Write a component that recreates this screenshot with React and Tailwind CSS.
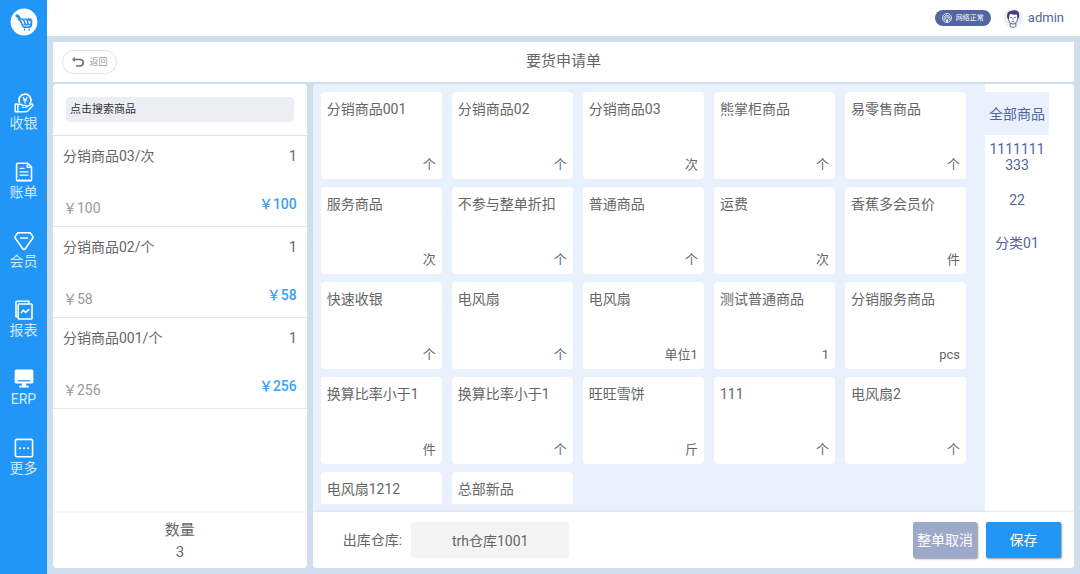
import React, { useState } from "react";

const products = [
  { name: "分销商品001", unit: "个" },
  { name: "分销商品02", unit: "个" },
  { name: "分销商品03", unit: "次" },
  { name: "熊掌柜商品", unit: "个" },
  { name: "易零售商品", unit: "个" },
  { name: "服务商品", unit: "次" },
  { name: "不参与整单折扣", unit: "个" },
  { name: "普通商品", unit: "个" },
  { name: "运费", unit: "次" },
  { name: "香蕉多会员价", unit: "件" },
  { name: "快速收银", unit: "个" },
  { name: "电风扇", unit: "个" },
  { name: "电风扇", unit: "单位1" },
  { name: "测试普通商品", unit: "1" },
  { name: "分销服务商品", unit: "pcs" },
  { name: "换算比率小于1", unit: "件" },
  { name: "换算比率小于1", unit: "个" },
  { name: "旺旺雪饼", unit: "斤" },
  { name: "111", unit: "个" },
  { name: "电风扇2", unit: "个" },
  { name: "电风扇1212" },
  { name: "总部新品" },
];

const cart = [
  { name: "分销商品03/次", count: 1, price: 100 },
  { name: "分销商品02/个", count: 1, price: 58 },
  { name: "分销商品001/个", count: 1, price: 256 },
];

const categories = ["全部商品", "1111111333", "22", "分类01"];

const Svg = ({ children }) => (
  <svg
    viewBox="0 0 20 20"
    className="h-5 w-5"
    fill="none"
    stroke="currentColor"
    strokeWidth="1.6"
    strokeLinecap="round"
    strokeLinejoin="round"
    aria-hidden="true"
  >
    {children}
  </svg>
);

const CashIcon = () => (
  <Svg>
    <path d="M5.4 9.4A6 6 0 1 1 16 10.400" />
    <path d="M9.200 4.600l1.900 2.200 1.900-2.200M11.100 6.800v3.200M9.600 7.200h3" strokeWidth="1.3" />
    <path d="M1.200 11h2.600v7.800H1.200z" strokeWidth="1.4" />
    <path
      d="M3.800 11.800c1.800-.9 3.400-.5 4.800.6h2.800c1.400 0 1.400 2 0 2H8.400M12.600 13.800l4.600-2.600c1.400-.6 2.200.8 1.200 1.800l-4.200 4.400c-.8.800-1.600 1.400-2.800 1.400H3.800"
      strokeWidth="1.4"
    />
  </Svg>
);

const BillIcon = () => (
  <Svg>
    <path d="M2.600 18V2.600c0-.8.5-1.400 1.300-1.400h9.400l4.200 4V18c-.8 1.300-2.200 1.300-3 0-.8 1.300-2.200 1.300-3 0-.8 1.300-2.200 1.300-3 0-.8 1.300-2.200 1.300-3 0-.8 1.300-2.200 1.300-2.900 0z" />
    <path d="M13.200 1.400v4h4M6 6.400h4M6 9.800h8M6 13.200h8" strokeWidth="1.2" />
  </Svg>
);

const MemberIcon = () => (
  <Svg>
    <path d="M4.600 1.800h10.800c.6 0 1 .2 1.300.6l2 3c.4.6.4 1.200 0 1.800l-7.500 10.600c-.6.9-1.800.9-2.400 0L1.300 7.200c-.4-.6-.4-1.200 0-1.800l2-3c.3-.4.7-.6 1.300-.6z" />
    <path d="M6.600 7h6.800" />
  </Svg>
);

const ReportIcon = () => (
  <Svg>
    <path d="M2 16.600V2.200c0-.6.4-1 1-1h11.800" />
    <path d="M5 4h12.200c.5 0 .8.3.8.8v13.400c0 .5-.3.8-.8.8H5c-.5 0-.8-.3-.8-.8V4.800c0-.5.3-.8.8-.8zM14.800 1.200V4M2 16.600h2.200" />
    <path d="M7.400 12.600l2-2.400 2.200 2.200 3.200-2.800" />
  </Svg>
);

const ErpIcon = () => (
  <Svg>
    <path
      d="M2.400.6h15.200c1 0 1.800.8 1.800 1.800v10.400c0 1-.8 1.800-1.800 1.800h-5.400v2.200h1.600c.6 0 1 .5 1 1.200v.6H5.200V18c0-.7.4-1.200 1-1.200h1.600v-2.200H2.400c-1 0-1.800-.8-1.800-1.800V2.400C.6 1.400 1.400.6 2.400.6z"
      fill="currentColor"
      stroke="none"
    />
    <path d="M4 11.800h12" stroke="#2196f7" strokeWidth="1.3" />
  </Svg>
);

const MoreIcon = () => (
  <Svg>
    <rect x="1.4" y="1.4" width="17.2" height="17.400" rx="1.6" />
    <path d="M6 10.200h.1M10 10.200h.1M14 10.200h.1" strokeWidth="2" />
  </Svg>
);

const menus = [
  { label: "收银", icon: CashIcon },
  { label: "账单", icon: BillIcon },
  { label: "会员", icon: MemberIcon },
  { label: "报表", icon: ReportIcon },
  { label: "ERP", icon: ErpIcon },
  { label: "更多", icon: MoreIcon },
];

const Logo = () => (
  <svg viewBox="0 0 28 28" className="h-7 w-7 shrink-0" role="img" aria-label="logo">
    <circle cx="14" cy="14" r="13.4" fill="#fff" />
    <g fill="none" stroke="#2b8de6" strokeLinecap="round" strokeLinejoin="round">
      <path d="M6.800 7.800l2 1.200.8 2.200" strokeWidth="2.800" />
      <path d="M9.800 11.400l3 6.600c.3.800.8 1.200 1.600 1.200h4.400c1.600 0 2.400-.8 2.500-2.200l.2-3.600c0-1.600-.8-2.400-2.400-2.400" strokeWidth="1.7" />
      <path d="M11.800 11.200c1.400-.2 2 .6 2.400 1.800l1.200 3.400M15 11c1.400-.2 2 .6 2.300 1.800l.9 3.400M18.200 11c.8.4 1 1 1.100 1.800" strokeWidth="1.6" />
      <path d="M13.800 16.200c.8 1 1.600 1 2.200 0 .8 1 1.700 1 2.400 0 .8.800 1.800.6 2.400-.4" strokeWidth="1.3" />
      <path d="M14.600 21.400v.6M19.200 21.400v.6" strokeWidth="1.600" />
    </g>
  </svg>
);

const Avatar = () => (
  <svg viewBox="0 0 20 20" className="h-5 w-5" aria-hidden="true">
    <circle cx="10" cy="10" r="9.400" fill="#e9f1f8" />
    <path d="M7.200 14.400h5.600v4.200c-1.700 1-3.900 1-5.600 0z" fill="#fff" stroke="#4a4a7c" strokeWidth=".8" />
    <path d="M5.200 8c0 4.600 1.600 8 4.800 8s4.800-3.400 4.800-8l-1-3H6.200z" fill="#fff" stroke="#4a4a7c" strokeWidth="1" />
    <path d="M4.400 10.600C3.400 6 4.600 3.200 7.600 3c3-1.400 7-.6 8 1.200.9 1.800.7 4.200.1 6.400l-1.100-1-.4-3c-2.400.4-5 .2-7-.8l-.8 1.600-.6 3.200z" fill="#45417a" />
    <path d="M7.200 9.400h1.800M11 9.400h1.800M10 9.800v2.200M8.800 13.600h2.400" stroke="#45417a" strokeWidth=".8" fill="none" />
  </svg>
);

const NetIcon = () => (
  <svg viewBox="0 0 10 10" className="h-[10px] w-[10px]" fill="none" stroke="#fff" strokeWidth=".8" aria-hidden="true">
    <circle cx="5" cy="5" r="4.500" />
    <path d="M3 7.500a3 3 0 1 1 4 0" />
    <path d="M4 6.400a1.500 1.500 0 1 1 2 0" />
    <path d="M5 5.200L3.600 8.800h2.800z" fill="#fff" stroke="none" />
  </svg>
);

const App = () => {
  const [active, setActive] = useState("全部商品");
  const [keyword, setKeyword] = useState("");

  const total = cart.reduce((sum, item) => sum + item.count, 0);

  return (
    <div className="flex h-screen bg-[#cfdeed] font-['Roboto','Noto_Sans_CJK_SC',sans-serif] text-sm text-[#666]">
      {/* side menu */}
      <nav className="flex w-[47px] shrink-0 flex-col items-center bg-[#2196f7] pt-2">
        <Logo />
        <ul className="mt-14 flex w-full flex-col gap-[29px] pt-px">
          {menus.map(({ label, icon: Icon }) => (
            <li key={label}>
              <a href="#" className="flex flex-col items-center text-white">
                <Icon />
                <span className="leading-5 text-[#d3e9fd]">{label}</span>
              </a>
            </li>
          ))}
        </ul>
      </nav>

      <div className="flex min-w-0 flex-1 flex-col">
        <header className="flex h-9 shrink-0 items-center justify-end bg-white pr-4">
          <span className="flex h-4 items-center gap-1 rounded-full bg-[#5265a0] px-[7px] text-[7px] text-white">
            <NetIcon />
            网络正常
          </span>
          <span className="ml-3 flex items-center gap-[5px] text-[13px] text-[#5265a0]">
            <Avatar />
            admin
          </span>
        </header>

        <main className="flex min-h-0 flex-1 flex-col p-[6px]">
          <div className="grid h-10 shrink-0 grid-cols-[1fr_auto_1fr] items-center bg-white px-[9px]">
            <button
              type="button"
              className="flex h-6 w-[55px] items-center justify-center gap-1 justify-self-start rounded-full border border-[#e2e2e2] text-[9px] text-[#999]"
            >
              <svg viewBox="0 0 14 12" className="h-3 w-[14px]" fill="none" stroke="#707070" strokeWidth="1.6" aria-hidden="true">
                <path d="M2.500 3.500H9a3.200 3.200 0 0 1 0 6.500H5" />
                <path d="M1 3.500L4 1v5z" fill="#707070" stroke="none" />
              </svg>
              返回
            </button>
            <h1 className="text-[15px]">要货申请单</h1>
          </div>

          <div className="mt-[2px] grid min-h-0 flex-1 grid-cols-[1fr_3fr] grid-rows-[minmax(0,1fr)] gap-[6px]">
            {/* selected products */}
            <section className="flex min-w-0 flex-col rounded bg-white">
              <div className="border-b border-[#d6e3f0] p-[13px]">
                <input
                  type="text"
                  aria-label="点击搜索商品"
                  placeholder="点击搜索商品"
                  value={keyword}
                  onChange={(e) => setKeyword(e.target.value)}
                  className="block h-[25px] w-full rounded bg-[#ebeff4] px-1 text-[11px] outline-none placeholder:text-[#333]"
                />
              </div>
              <ul className="min-h-0 flex-1 overflow-hidden">
                {cart.map((item) => (
                  <li
                    key={item.name}
                    className="flex h-[91px] flex-col justify-between border-b border-[#e1ebf5] px-[10px] pt-[10px] pb-2"
                  >
                    <div className="flex justify-between leading-5">
                      <span>{item.name}</span>
                      <span>{item.count}</span>
                    </div>
                    <div className="flex items-end justify-between leading-5">
                      <span className="text-[#999]">￥{item.price}</span>
                      <span className="pb-1 font-medium text-[#3ba0f5]">￥{item.price}</span>
                    </div>
                  </li>
                ))}
              </ul>
              <div className="h-[57px] border-t-2 border-[#f5f7f9] pt-[6px] text-center text-[15px] leading-[22px]">
                <p>数量</p>
                <p>{total}</p>
              </div>
            </section>

            <section className="flex min-w-0 flex-col overflow-hidden rounded bg-[#e9f1fd]">
              <div className="flex min-h-0 flex-1">
                <ul className="my-2 mr-[19px] ml-2 grid flex-1 auto-rows-[87px] grid-cols-5 gap-x-[10px] gap-y-2 overflow-y-auto [scrollbar-width:none]">
                  {products.map((item, index) => (
                    <li key={index}>
                      <button
                        type="button"
                        className="flex h-full w-full flex-col justify-between rounded bg-white px-[6px] pt-[7px] pb-1 leading-5"
                      >
                        <span className="text-left">{item.name}</span>
                        {item.unit && <span className="self-end text-[13px]">{item.unit}</span>}
                      </button>
                    </li>
                  ))}
                </ul>

                <div className="w-[89px] shrink-0 bg-white pt-2">
                  {categories.map((name) => (
                    <button
                      key={name}
                      type="button"
                      onClick={() => setActive(name)}
                      className={`flex h-[43px] w-16 items-center justify-center px-1 leading-4 break-all text-[#5265a0] ${
                        active === name ? "bg-[#e9f1fd]" : ""
                      }`}
                    >
                      {name}
                    </button>
                  ))}
                </div>
              </div>

              <footer className="flex h-14 shrink-0 items-center bg-white pr-[13px] pl-[30px] shadow-[0_-1px_2px_#d9e3ee]">
                <label htmlFor="warehouse">出库仓库:</label>
                <input
                  id="warehouse"
                  type="text"
                  readOnly
                  value="trh仓库1001"
                  className="ml-[9px] h-9 w-[158px] rounded-xs bg-[#f4f4f4] text-center outline-none"
                />
                <button
                  type="button"
                  className="ml-auto h-9 w-16 rounded-xs bg-[#9ca9c8] text-white shadow-[1px_1px_2px_#999]"
                >
                  整单取消
                </button>
                <button
                  type="button"
                  className="ml-[9px] h-9 w-[75px] rounded-xs bg-[#2196f7] text-white shadow-[1px_1px_2px_#999]"
                >
                  保存
                </button>
              </footer>
            </section>
          </div>
        </main>
      </div>
    </div>
  );
};

export default App;
